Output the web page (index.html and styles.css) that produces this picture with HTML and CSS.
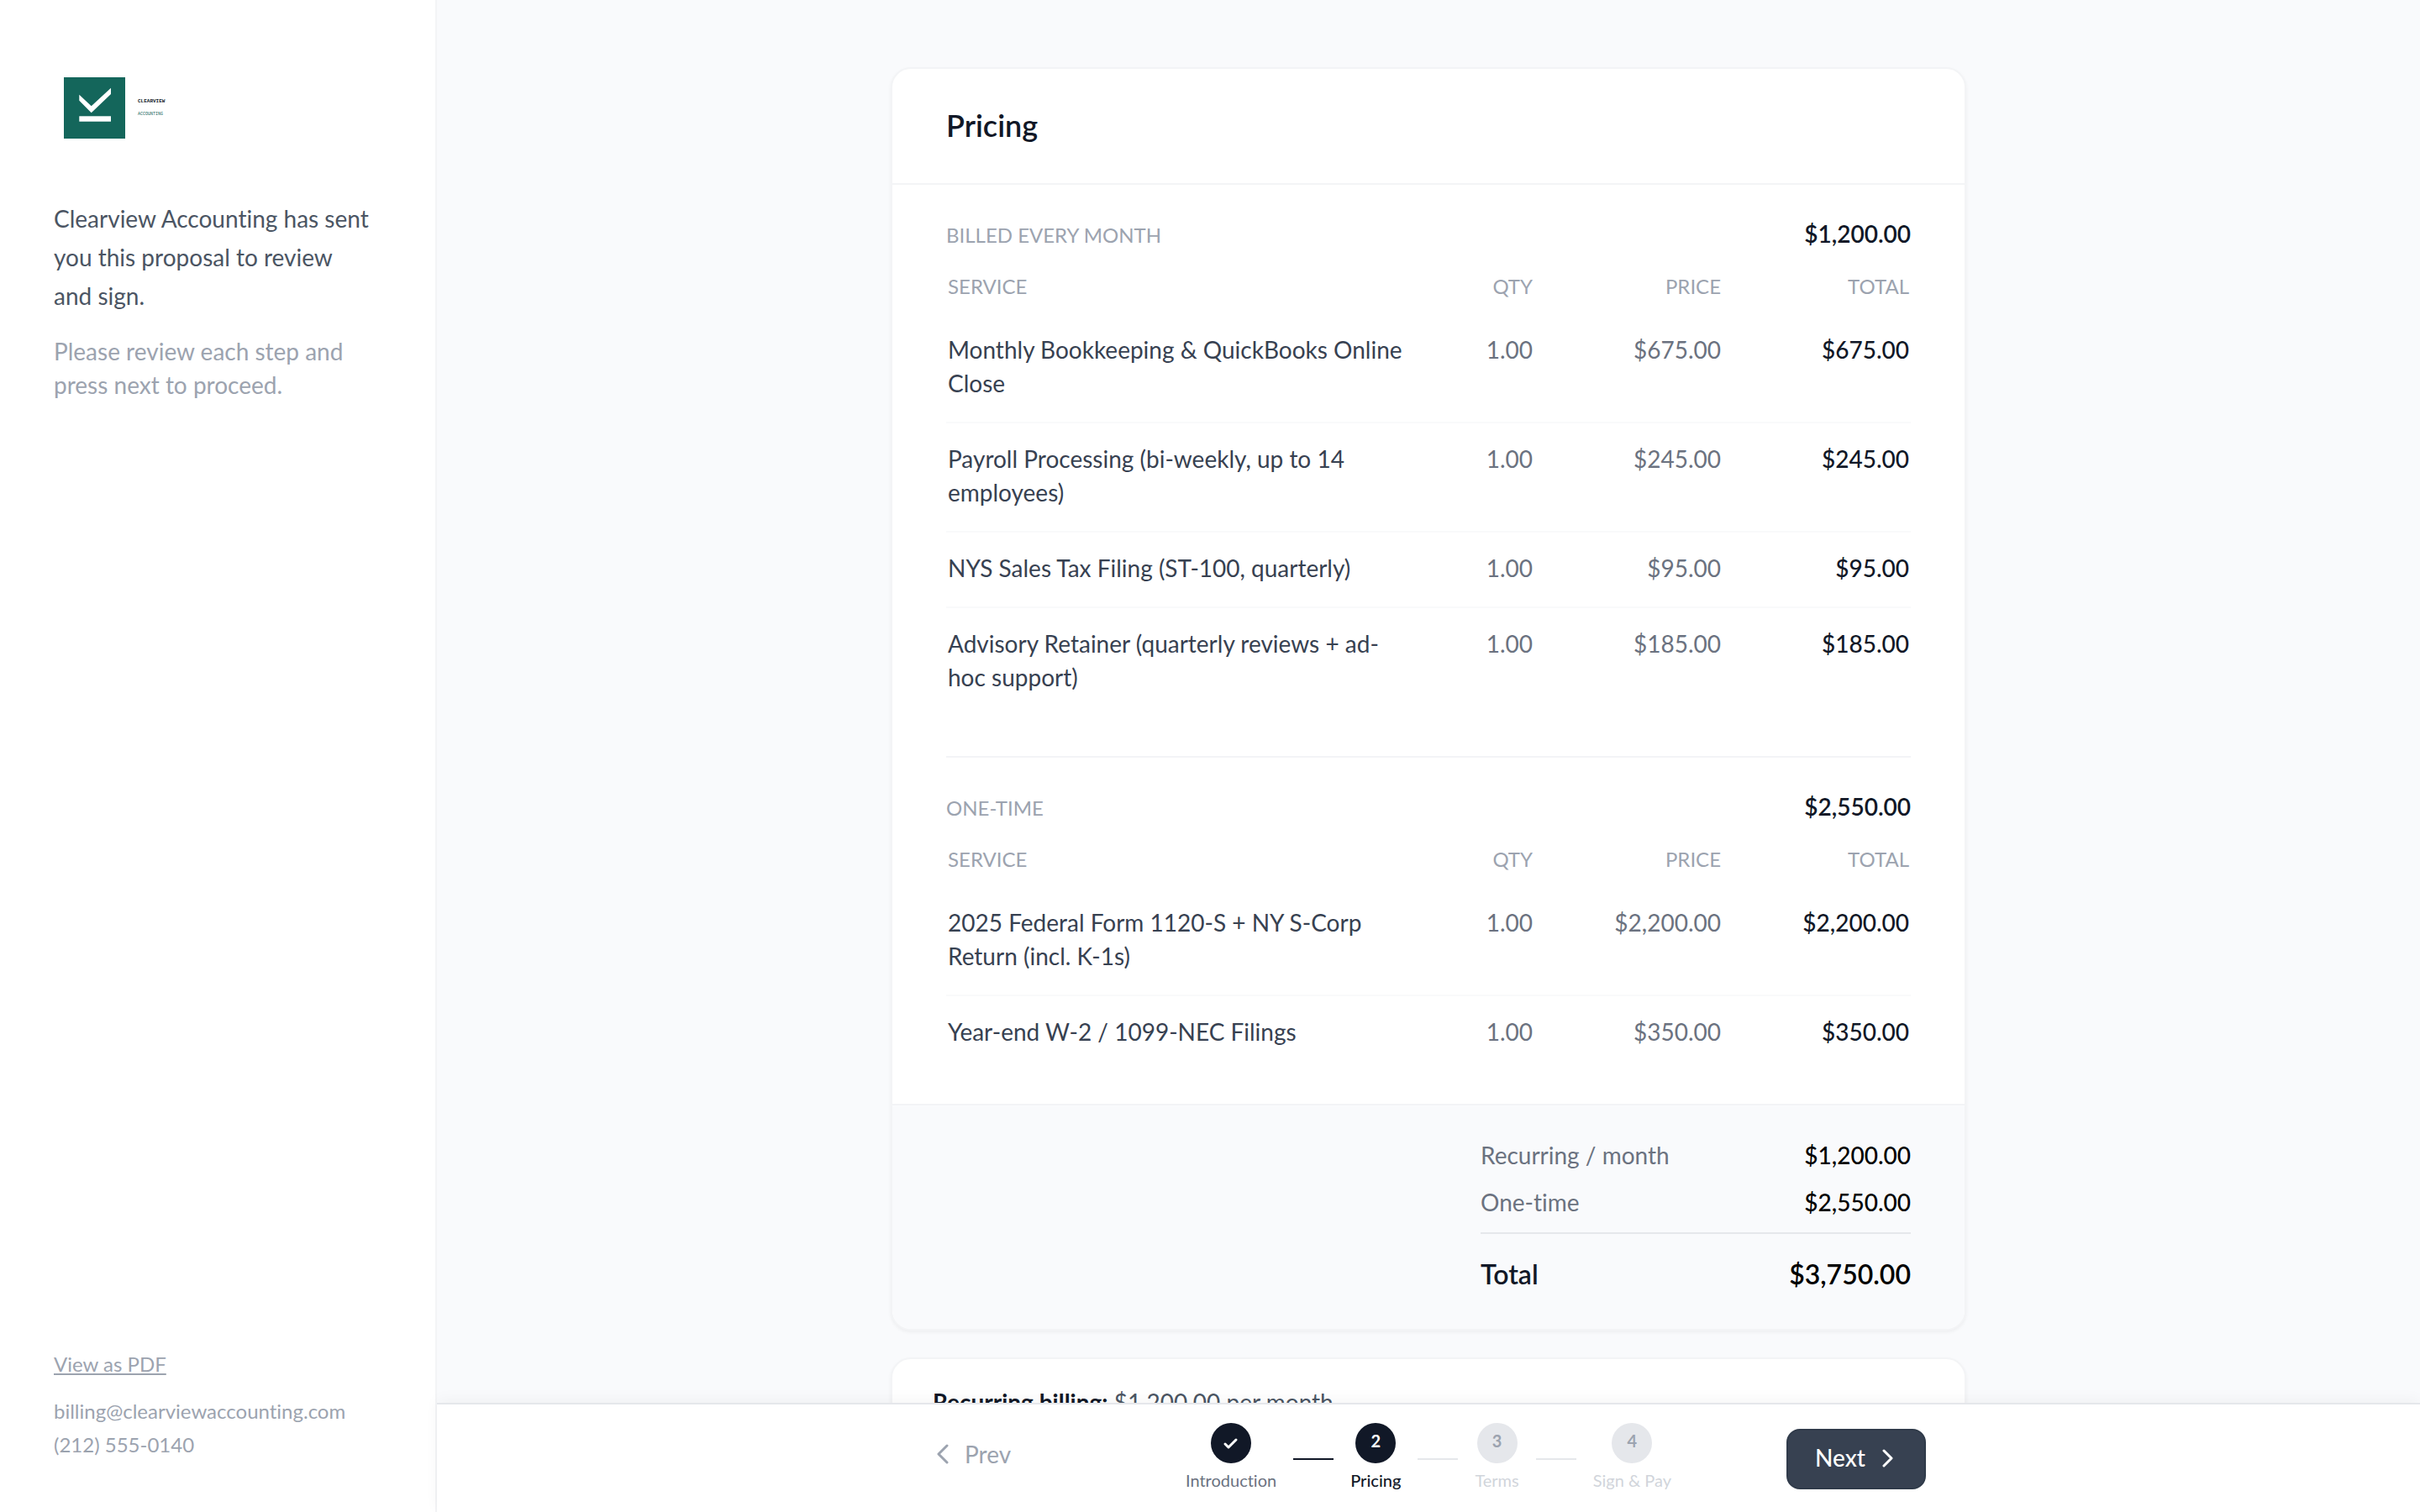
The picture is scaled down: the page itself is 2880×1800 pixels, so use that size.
FILE: index.html
```html
<!DOCTYPE html>
<html lang="en">
<head>
    <meta charset="UTF-8">
    <meta name="viewport" content="width=device-width, initial-scale=1.0">
    <title>Proposal - Clearview Accounting</title>
    <link rel="stylesheet" href="styles.css">
</head>
<body>
    <aside class="sidebar">
        <svg class="logo" viewBox="0 0 144 96" role="img" aria-label="Clearview Accounting">
            <rect x="12" y="12" width="73" height="73" fill="#14665b"/>
            <path d="M30.3 32.7V39.7L44.7 54.3L68 32V24.7L44.7 46.3Z" fill="#fff"/>
            <rect x="30.3" y="58.3" width="37.7" height="6.4" fill="#fff"/>
            <text class="logo-name" x="100" y="42">CLEARVIEW</text>
            <text class="logo-sub" x="100" y="57">ACCOUNTING</text>
        </svg>
        <p class="intro">Clearview Accounting has sent you this proposal to review and&nbsp;sign.</p>
        <p class="hint">Please review each step and press next to proceed.</p>
        <div class="contact">
            <a class="pdf-link" href="#">View as PDF</a>
            <div>billing@clearviewaccounting.com</div>
            <div>(212) 555-0140</div>
        </div>
    </aside>

    <div class="page">
        <main class="content">
            <section class="card">
                <h1 class="card-title">Pricing</h1>

                <div class="group">
                    <div class="group-head">
                        <h2 class="label">Billed every month</h2>
                        <span class="group-total">$1,200.00</span>
                    </div>
                    <table>
                        <thead>
                            <tr><th class="service">Service</th><th class="qty">Qty</th><th class="amount">Price</th><th class="amount">Total</th></tr>
                        </thead>
                        <tbody>
                            <tr><td>Monthly Bookkeeping &amp; QuickBooks Online Close</td><td>1.00</td><td>$675.00</td><td>$675.00</td></tr>
                            <tr><td>Payroll Processing (bi-weekly, up to 14 employees)</td><td>1.00</td><td>$245.00</td><td>$245.00</td></tr>
                            <tr><td>NYS Sales Tax Filing (ST-100, quarterly)</td><td>1.00</td><td>$95.00</td><td>$95.00</td></tr>
                            <tr><td>Advisory Retainer (quarterly reviews + ad-hoc support)</td><td>1.00</td><td>$185.00</td><td>$185.00</td></tr>
                        </tbody>
                    </table>
                </div>

                <div class="group">
                    <div class="group-head">
                        <h2 class="label">One-time</h2>
                        <span class="group-total">$2,550.00</span>
                    </div>
                    <table>
                        <thead>
                            <tr><th class="service">Service</th><th class="qty">Qty</th><th class="amount">Price</th><th class="amount">Total</th></tr>
                        </thead>
                        <tbody>
                            <tr><td>2025 Federal Form 1120-S + NY S-Corp Return (incl. K-1s)</td><td>1.00</td><td>$2,200.00</td><td>$2,200.00</td></tr>
                            <tr><td>Year-end W-2 / 1099-NEC Filings</td><td>1.00</td><td>$350.00</td><td>$350.00</td></tr>
                        </tbody>
                    </table>
                </div>

                <div class="summary">
                    <dl class="totals">
                        <div class="totals-row"><dt>Recurring / month</dt><dd>$1,200.00</dd></div>
                        <div class="totals-row"><dt>One-time</dt><dd>$2,550.00</dd></div>
                        <div class="totals-row grand"><dt>Total</dt><dd>$3,750.00</dd></div>
                    </dl>
                </div>
            </section>

            <section class="card note">
                <p><strong>Recurring billing:</strong> $1,200.00 per month</p>
            </section>
        </main>

        <footer class="bar">
            <div class="bar-inner">
                <button type="button" class="prev">
                    <svg class="chevron" viewBox="0 0 24 24"><path d="M15 2L5 12L15 22"/></svg>
                    Prev
                </button>
                <ol class="steps">
                    <li class="step done">
                        <span class="dot"><svg class="check" viewBox="0 0 24 24"><path d="M5 13L9 17L18 8"/></svg></span>
                        <span>Introduction</span>
                    </li>
                    <li class="line active"></li>
                    <li class="step current">
                        <span class="dot">2</span>
                        <span>Pricing</span>
                    </li>
                    <li class="line"></li>
                    <li class="step">
                        <span class="dot">3</span>
                        <span>Terms</span>
                    </li>
                    <li class="line"></li>
                    <li class="step">
                        <span class="dot">4</span>
                        <span>Sign &amp; Pay</span>
                    </li>
                </ol>
                <button type="button" class="next">
                    Next
                    <svg class="chevron" viewBox="0 0 24 24"><path d="M8 4L17 13L8 22"/></svg>
                </button>
            </div>
        </footer>
    </div>
</body>
</html>
```
FILE: styles.css
```css
* {
    box-sizing: border-box;
}

body {
    display: flex;
    height: 100vh;
    margin: 0;
    overflow: hidden;
    background: #f9fafc;
    color: #111827;
    font-family: Lato, "Liberation Sans", sans-serif;
    font-size: 28px;
    font-variant-ligatures: none;
    line-height: 40px;
}

h1, h2, p, dl, dd, ol {
    margin: 0;
    padding: 0;
}

button {
    font: inherit;
    cursor: pointer;
}

/* Sidebar */
.sidebar {
    display: flex;
    flex-direction: column;
    flex: none;
    width: 520px;
    padding: 80px 64px 60px;
    background: #fff;
    border-right: 2px solid #f3f4f6;
}

.logo {
    width: 144px;
    height: 96px;
    margin-bottom: 61px;
}

.logo-name,
.logo-sub {
    font-family: "Liberation Mono", monospace;
    font-size: 6px;
    font-weight: bold;
    fill: #111827;
}

.logo-sub {
    font-size: 5px;
    font-weight: normal;
    fill: #14665b;
}

.intro {
    margin-bottom: 23px;
    color: #4b5563;
    line-height: 46px;
}

.hint {
    color: #9ca3af;
}

.contact {
    margin-top: auto;
    color: #9ca3af;
    font-size: 24px;
}

.pdf-link {
    display: inline-block;
    margin-bottom: 16px;
    color: inherit;
}

/* Main column */
.page {
    display: flex;
    flex: 1;
    flex-direction: column;
    min-width: 0;
}

.content {
    flex: 1;
    min-height: 0;
    overflow: hidden;
    padding: 80px 48px 0;
}

.card {
    max-width: 1280px;
    margin: 0 auto 32px;
    overflow: hidden;
    background: #fff;
    border: 2px solid #f3f4f6;
    border-radius: 24px;
    box-shadow: 0 2px 4px rgba(0, 0, 0, 0.05);
}

.card-title {
    padding: 39px 64px 41px;
    border-bottom: 2px solid #f3f4f6;
    font-size: 36px;
    font-weight: 600;
    line-height: 56px;
}

.group {
    margin: 0 64px;
    padding: 38px 0 48px;
    border-bottom: 2px solid #f3f4f6;
}

.group + .group {
    padding-bottom: 40px;
    border-bottom: none;
}

.group-head {
    display: flex;
    align-items: baseline;
    justify-content: space-between;
    margin-bottom: 24px;
}

.label,
th {
    color: #9ca3af;
    font-size: 24px;
    font-weight: 400;
    line-height: 32px;
    text-transform: uppercase;
}

.group-total {
    font-weight: 600;
}

table {
    width: 100%;
    border-spacing: 0;
    table-layout: fixed;
}

th {
    padding: 3px 2px 17px;
    text-align: right;
}

.service {
    text-align: left;
}

.qty {
    width: 128px;
}

.amount {
    width: 224px;
}

td {
    padding: 22px 2px 26px;
    border-bottom: 2px solid #f9fafb;
    color: #6b7280;
    text-align: right;
    vertical-align: top;
}

tr:last-child td {
    border-bottom: none;
}

td:first-child {
    padding-right: 24px;
    color: #374151;
    text-align: left;
}

td:last-child {
    color: #111827;
    font-weight: 500;
}

.summary {
    padding: 39px 64px 41px;
    background: #f9fafc;
    border-top: 2px solid #f3f4f6;
}

.totals {
    display: flex;
    flex-direction: column;
    gap: 16px;
    width: 512px;
    margin-left: auto;
}

.totals-row {
    display: flex;
    justify-content: space-between;
}

.totals-row dt {
    color: #6b7280;
}

.totals-row dd {
    color: #000;
    font-weight: 500;
}

.grand {
    padding-top: 24px;
    border-top: 2px solid #e5e7eb;
    font-size: 32px;
    line-height: 48px;
}

.grand dt,
.grand dd {
    font-weight: 600;
}

.grand dt {
    color: #111827;
}

.note {
    padding: 31px 48px 32px;
    color: #4b5563;
}

.note strong {
    color: #111827;
    font-weight: 700;
}

/* Bottom bar */
.bar {
    position: relative;
    flex: none;
    background: #fff;
    border-top: 2px solid #e5e7eb;
    box-shadow: 0 -4px 16px rgba(0, 0, 0, 0.04);
}

.bar-inner {
    display: grid;
    grid-template-columns: 1fr auto 1fr;
    align-items: center;
    max-width: 1280px;
    margin: 0 auto;
    padding: 22px 48px 20px;
}

.prev,
.next {
    display: flex;
    align-items: center;
    border: none;
    background: none;
}

.prev {
    justify-self: start;
    gap: 12px;
    padding: 0 4px 12px;
    color: #9ca3af;
}

.next {
    justify-self: end;
    gap: 14px;
    padding: 12px 32px 16px;
    background: #374151;
    border: 2px solid #303b4a;
    border-radius: 16px;
    color: #fff;
    font-weight: 500;
}

.chevron,
.check {
    width: 24px;
    height: 24px;
    fill: none;
    stroke: currentColor;
    stroke-width: 3;
    stroke-linecap: round;
    stroke-linejoin: round;
}

.steps {
    display: flex;
    align-items: center;
    gap: 20px;
    list-style: none;
    font-size: 20px;
    line-height: 28px;
}

.step {
    display: flex;
    flex-direction: column;
    align-items: center;
    gap: 6px;
    padding-bottom: 4px;
    color: #d1d5db;
}

.dot {
    display: flex;
    align-items: center;
    justify-content: center;
    width: 48px;
    height: 48px;
    padding-bottom: 6px;
    background: #e5e7eb;
    border-radius: 50%;
    color: #9ca3af;
    font-weight: 700;
}

.done .dot,
.current .dot {
    background: #111827;
    color: #fff;
}

.done .dot {
    padding-bottom: 0;
}

.done {
    color: #6b7280;
}

.current {
    color: #111827;
    font-weight: 500;
}

.line {
    width: 48px;
    height: 2px;
    background: #e5e7eb;
}

.line.active {
    background: #111827;
}
```
